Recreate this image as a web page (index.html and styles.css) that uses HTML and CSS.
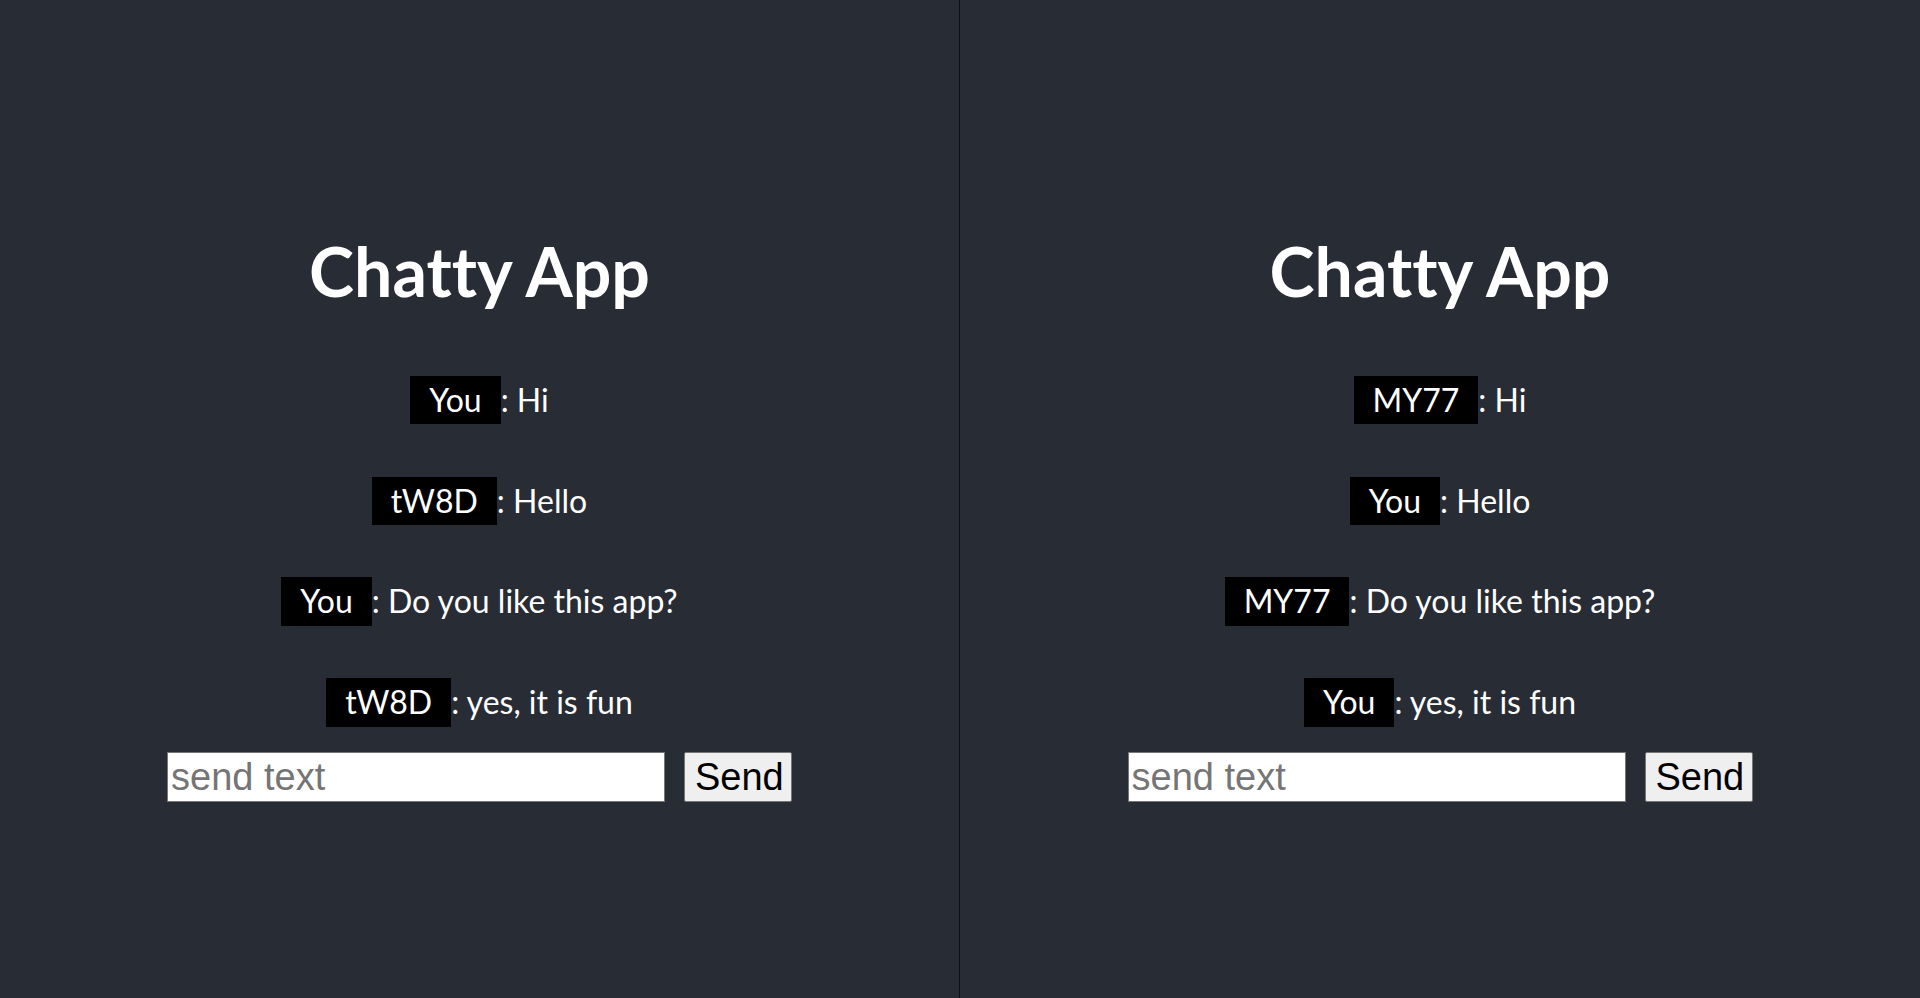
FILE: index.html
```html
<!DOCTYPE html>
<html lang="en">
<head>
<meta charset="utf-8">
<title>Chatty App</title>
<link rel="stylesheet" href="styles.css">
</head>
<body>
<div class="screen">
  <section class="pane pane-left">
    <h1 class="title">Chatty App</h1>
    <div class="messages">
      <div class="msg"><span class="name">You</span>: Hi</div>
      <div class="msg"><span class="name">tW8D</span>: Hello</div>
      <div class="msg"><span class="name">You</span>: Do you like this app?</div>
      <div class="msg"><span class="name">tW8D</span>: yes, it is fun</div>
    </div>
    <form class="composer">
      <input class="text-input" type="text" placeholder="send text">
      <button class="send-btn" type="button">Send</button>
    </form>
  </section>
  <section class="pane pane-right">
    <h1 class="title">Chatty App</h1>
    <div class="messages">
      <div class="msg"><span class="name">MY77</span>: Hi</div>
      <div class="msg"><span class="name">You</span>: Hello</div>
      <div class="msg"><span class="name">MY77</span>: Do you like this app?</div>
      <div class="msg"><span class="name">You</span>: yes, it is fun</div>
    </div>
    <form class="composer">
      <input class="text-input" type="text" placeholder="send text">
      <button class="send-btn" type="button">Send</button>
    </form>
  </section>
</div>
</body>
</html>
```
FILE: styles.css
```css
* { box-sizing: border-box; }
html, body {
  margin: 0;
  padding: 0;
  height: 100%;
  background: #282c34;
}
body {
  font-family: Lato, "Open Sans", sans-serif;
  font-variant-ligatures: none;
  color: #ffffff;
}
.screen {
  display: flex;
  height: 998px;
}
.pane {
  display: flex;
  flex-direction: column;
  align-items: center;
  padding-top: 230px;
  background: #282c34;
}
.pane-left {
  width: 960px;
  border-right: 1px solid #0e1016;
}
.pane-right {
  flex: 1;
}
.title {
  margin: 0;
  font-family: Lato, sans-serif;
  font-weight: 700;
  font-size: 68px;
  line-height: 81.6px;
  font-variant-ligatures: none;
  color: #ffffff;
}
.messages {
  display: flex;
  flex-direction: column;
  align-items: center;
  gap: 52.3px;
  margin-top: 64.4px;
}
.msg {
  font-size: 32px;
  line-height: 38.4px;
  white-space: nowrap;
}
.name {
  display: inline-block;
  background: #000000;
  color: #ffffff;
  padding: 5px 19px;
}
.composer {
  display: flex;
  gap: 19px;
  margin: 25.6px 0 0;
}
.text-input {
  width: 498px;
  height: 50px;
  margin: 0;
  padding: 0 3px;
  border: 1px solid #767676;
  border-radius: 0;
  background: #ffffff;
  font-family: "Liberation Sans", Arial, sans-serif;
  font-size: 38px;
  color: #000;
  outline: none;
}
.text-input::placeholder {
  color: #757575;
}
.send-btn {
  height: 50px;
  width: 108px;
  margin: 0;
  padding: 0 10px;
  border: 1px solid #767676;
  border-radius: 2px;
  background: #efefef;
  font-family: "Liberation Sans", Arial, sans-serif;
  font-size: 38px;
  color: #000;
}
```
